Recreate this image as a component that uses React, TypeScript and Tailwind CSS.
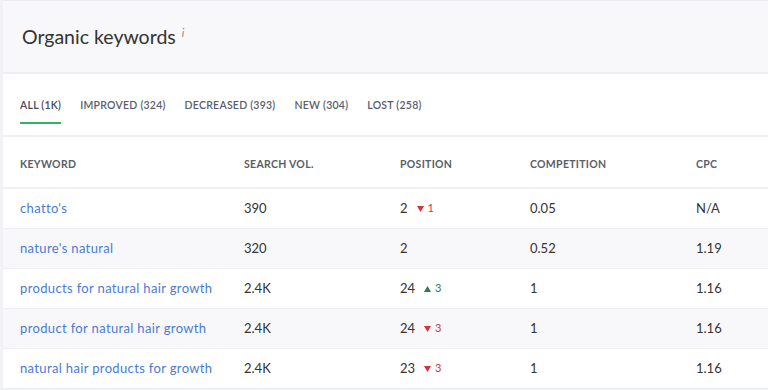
import React from 'react';

type Row = {
  keyword: string;
  volume: string;
  position: number;
  delta?: number;
  competition: string;
  cpc: string;
};

const ROWS: Row[] = [
  { keyword: "chatto's", volume: '390', position: 2, delta: -1, competition: '0.05', cpc: 'N/A' },
  { keyword: "nature's natural", volume: '320', position: 2, competition: '0.52', cpc: '1.19' },
  { keyword: 'products for natural hair growth', volume: '2.4K', position: 24, delta: 3, competition: '1', cpc: '1.16' },
  { keyword: 'product for natural hair growth', volume: '2.4K', position: 24, delta: -3, competition: '1', cpc: '1.16' },
  { keyword: 'natural hair products for growth', volume: '2.4K', position: 23, delta: -3, competition: '1', cpc: '1.16' },
];

const TABS = ['ALL (1K)', 'IMPROVED (324)', 'DECREASED (393)', 'NEW (304)', 'LOST (258)'];

// column x offsets taken from the grid: keyword / vol / position / competition / cpc
const COLS = 'grid grid-cols-[224px_156px_130px_166px_1fr]';

const Delta: React.FC<{ value: number }> = ({ value }) => {
  const up = value > 0;
  return (
    <span className={`ml-[9px] inline-flex items-center gap-[4px] text-[11px] ${up ? 'text-[#2e7d52]' : 'text-[#d8323c]'}`}>
      <svg width="7" height="6" viewBox="0 0 7 6" className="fill-current">
        {up ? <polygon points="3.5,0 7,6 0,6" /> : <polygon points="0,0 7,0 3.5,6" />}
      </svg>
      {Math.abs(value)}
    </span>
  );
};

export default function App() {
  return (
    <div className="w-[768px] h-[390px] overflow-hidden bg-[#f1f2f6] pl-[3px] font-['Lato','Open_Sans',sans-serif]">
      <div className="border-t border-[#ecedf2] bg-white">
        {/* Title */}
        <div className="h-[73px] bg-[#f8f8fb] border-b-2 border-[#eeeff4] pl-[19px] pt-[22px]">
          <h2 className="text-[19.5px] leading-[28px] text-[#333] flex items-start">
            Organic keywords
            <span className="ml-[6px] mt-[-4px] text-[11px] italic text-[#888]">i</span>
          </h2>
        </div>

        {/* Tabs */}
        <div className="h-[63px] border-b-2 border-[#eeeff4] pl-[17px] flex items-start gap-[19px] pt-[24px]">
          {TABS.map((t, i) => (
            <div
              key={t}
              className={`pb-[8px] text-[10.5px] font-semibold tracking-[0.25px] border-b-2 ${
                i === 0 ? 'text-[#444a5a] border-[#2cb55e]' : 'text-[#5a5e6a] border-transparent'
              }`}
            >
              {t}
            </div>
          ))}
        </div>

        {/* Table head */}
        <div className={`${COLS} h-[52px] pt-[5px] items-center pl-[17px] border-b-2 border-[#f0f1f5] text-[10.5px] font-bold tracking-[0.3px] text-[#5a5e68]`}>
          <div>KEYWORD</div>
          <div>SEARCH VOL.</div>
          <div>POSITION</div>
          <div>COMPETITION</div>
          <div>CPC</div>
        </div>

        {/* Rows */}
        {ROWS.map((r, i) => (
          <div
            key={r.keyword}
            className={`${COLS} h-[40px] items-center pl-[17px] border-b border-[#eeeff3] text-[13px] text-[#333] ${
              i % 2 === 1 ? 'bg-[#f8f8fb]' : 'bg-white'
            }`}
          >
            <div className="text-[#4a7bd4] tracking-[0.35px]">{r.keyword}</div>
            <div>{r.volume}</div>
            <div className="flex items-center">
              {r.position}
              {r.delta !== undefined && <Delta value={r.delta} />}
            </div>
            <div>{r.competition}</div>
            <div>{r.cpc}</div>
          </div>
        ))}
      </div>
    </div>
  );
}
